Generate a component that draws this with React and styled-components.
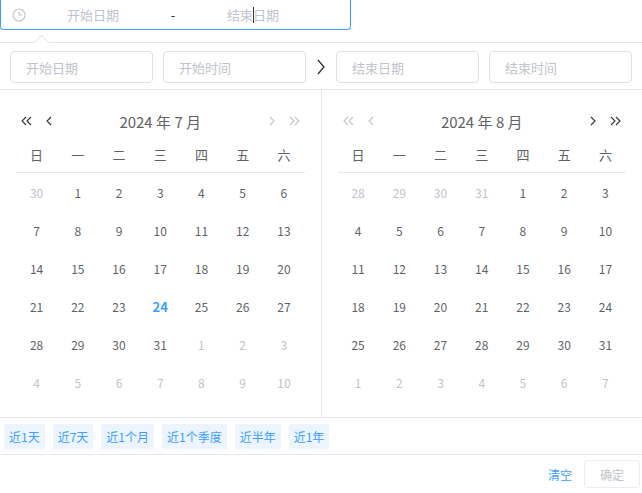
import React from "react";
import styled, { createGlobalStyle } from "styled-components";

const Global = createGlobalStyle`
  body { margin: 0; font-family: "Noto Sans CJK SC", "Noto Sans", sans-serif; background: #fff; }
  * { box-sizing: border-box; }
`;

const Page = styled.div`
  width: 642px;
  height: 493px;
  position: relative;
  overflow: hidden;
`;

const RangeInput = styled.div`
  width: 351px;
  height: 30px;
  border: 1px solid #409eff;
  border-top: none;
  border-radius: 0 0 4px 4px;
  display: flex;
  align-items: center;
  padding-left: 11px;
  font-size: 13px;
  color: #c0c4cc;
`;
const RangeField = styled.span`
  width: 130px;
  text-align: center;
  position: relative;
`;
const Sep = styled.span`
  width: 30px;
  text-align: center;
  color: #303133;
`;
const Caret = styled.i`
  position: absolute;
  left: 65px;
  top: 2px;
  width: 1px;
  height: 16px;
  background: #303133;
`;

const Popup = styled.div`
  margin-top: 12px;
  border-top: 1px solid #e4e7ed;
  position: relative;
  &::before {
    content: "";
    position: absolute;
    left: 36px;
    top: -6px;
    width: 10px;
    height: 10px;
    background: #fff;
    border-left: 1px solid #e4e7ed;
    border-top: 1px solid #e4e7ed;
    transform: rotate(45deg);
  }
`;

const InputsRow = styled.div`
  display: flex;
  align-items: center;
  padding: 8px 10px 6px;
  border-bottom: 1px solid #e4e7ed;
`;
const Half = styled.div`
  display: flex;
  gap: 10px;
  flex: 1;
`;
const Box = styled.div`
  flex: 1;
  height: 32px;
  border: 1px solid #dcdfe6;
  border-radius: 4px;
  font-size: 13px;
  color: #c0c4cc;
  display: flex;
  align-items: center;
  padding-left: 15px;
`;
const Arrow = styled.div`
  width: 30px;
  display: flex;
  justify-content: center;
`;

const Panels = styled.div`
  display: flex;
  border-bottom: 1px solid #e4e7ed;
`;
const Panel = styled.div`
  flex: 1;
  padding: 16px 16px 16px;
  & + & { border-left: 1px solid #e4e7ed; }
`;
const Header = styled.div`
  display: flex;
  align-items: center;
  height: 30px;
`;
const Nav = styled.span`
  width: 22px;
  display: flex;
  justify-content: center;
  color: ${p => (p.off ? "#c0c4cc" : "#303133")};
`;
const Title = styled.div`
  flex: 1;
  text-align: center;
  font-size: 15px;
  color: #606266;
`;
const Grid = styled.div`
  display: grid;
  grid-template-columns: repeat(7, 1fr);
`;
const Week = styled(Grid)`
  border-bottom: 1px solid #e4e7ed;
  height: 37px;
  align-items: center;
  font-size: 13px;
  color: #606266;
`;
const Cell = styled.div`
  height: 38px;
  display: flex;
  align-items: center;
  justify-content: center;
  font-size: 12px;
  color: ${p => (p.today ? "#409eff" : p.off ? "#c0c4cc" : "#606266")};
  font-weight: ${p => (p.today ? 700 : 400)};
  ${p => p.today && "font-size: 13px;"}
`;
const WeekCell = styled.div`
  text-align: center;
`;

const Shortcuts = styled.div`
  display: flex;
  gap: 8px;
  padding: 6px 4px 5px;
  border-bottom: 1px solid #e4e7ed;
`;
const Chip = styled.span`
  background: #ecf5ff;
  color: #409eff;
  font-size: 12px;
  padding: 0 5px;
  height: 25px;
  line-height: 25px;
`;
const Footer = styled.div`
  display: flex;
  justify-content: flex-end;
  align-items: center;
  gap: 12px;
  padding: 5px 2px 0;
`;
const TextBtn = styled.span`
  color: #409eff;
  font-size: 12px;
`;
const OkBtn = styled.span`
  border: 1px solid #ebeef5;
  border-radius: 3px;
  color: #c0c4cc;
  font-size: 12px;
  width: 56px;
  height: 28px;
  display: flex;
  align-items: center;
  justify-content: center;
`;

const Chev = ({ dir = "r", dbl, size = 10 }) => (
  <svg width={dbl ? 12 : 8} height={size} viewBox={dbl ? "0 0 12 10" : "0 0 8 10"} fill="none" stroke="currentColor" strokeWidth="1.1">
    {dir === "l" ? (
      dbl ? <path d="M5 1L1 5l4 4M10 1L6 5l4 4" /> : <path d="M6 1L2 5l4 4" />
    ) : dbl ? <path d="M2 1l4 4-4 4M7 1l4 4-4 4" /> : <path d="M2 1l4 4-4 4" />}
  </svg>
);

const weeks = ["日", "一", "二", "三", "四", "五", "六"];
const build = (prevLast, lead, days) => {
  const out = [];
  for (let i = lead - 1; i >= 0; i--) out.push({ d: prevLast - i, off: true });
  for (let i = 1; i <= days; i++) out.push({ d: i });
  let n = 1;
  while (out.length < 42) out.push({ d: n++, off: true });
  return out;
};
const july = build(30, 1, 31);
const aug = build(31, 4, 31);

const Cal = ({ title, cells, leftOn, today }) => (
  <Panel>
    <Header>
      <Nav off={!leftOn}><Chev dir="l" dbl /></Nav>
      <Nav off={!leftOn}><Chev dir="l" /></Nav>
      <Title>{title}</Title>
      <Nav off={leftOn}><Chev /></Nav>
      <Nav off={leftOn}><Chev dbl /></Nav>
    </Header>
    <Week>{weeks.map(w => <WeekCell key={w}>{w}</WeekCell>)}</Week>
    <Grid>
      {cells.map((c, i) => (
        <Cell key={i} off={c.off} today={today && !c.off && c.d === today}>{c.d}</Cell>
      ))}
    </Grid>
  </Panel>
);

export default function App() {
  return (
    <Page>
      <Global />
      <RangeInput>
        <svg width="14" height="14" viewBox="0 0 14 14" fill="none" stroke="#c0c4cc" strokeWidth="1.1">
          <circle cx="7" cy="7" r="6" />
          <path d="M7 3.5V7h3" />
        </svg>
        <RangeField style={{ marginLeft: 2 }}>开始日期</RangeField>
        <Sep>-</Sep>
        <RangeField>结束日期<Caret /></RangeField>
      </RangeInput>
      <Popup>
        <InputsRow>
          <Half><Box>开始日期</Box><Box>开始时间</Box></Half>
          <Arrow>
            <svg width="10" height="18" viewBox="0 0 10 18" fill="none" stroke="#303133" strokeWidth="1.3">
              <path d="M2 2l6 7-6 7" />
            </svg>
          </Arrow>
          <Half><Box>结束日期</Box><Box>结束时间</Box></Half>
        </InputsRow>
        <Panels>
          <Cal title="2024 年 7 月" cells={july} leftOn today={24} />
          <Cal title="2024 年 8 月" cells={aug} />
        </Panels>
        <Shortcuts>
          {["近1天", "近7天", "近1个月", "近1个季度", "近半年", "近1年"].map(s => <Chip key={s}>{s}</Chip>)}
        </Shortcuts>
        <Footer>
          <TextBtn>清空</TextBtn>
          <OkBtn>确定</OkBtn>
        </Footer>
      </Popup>
    </Page>
  );
}
